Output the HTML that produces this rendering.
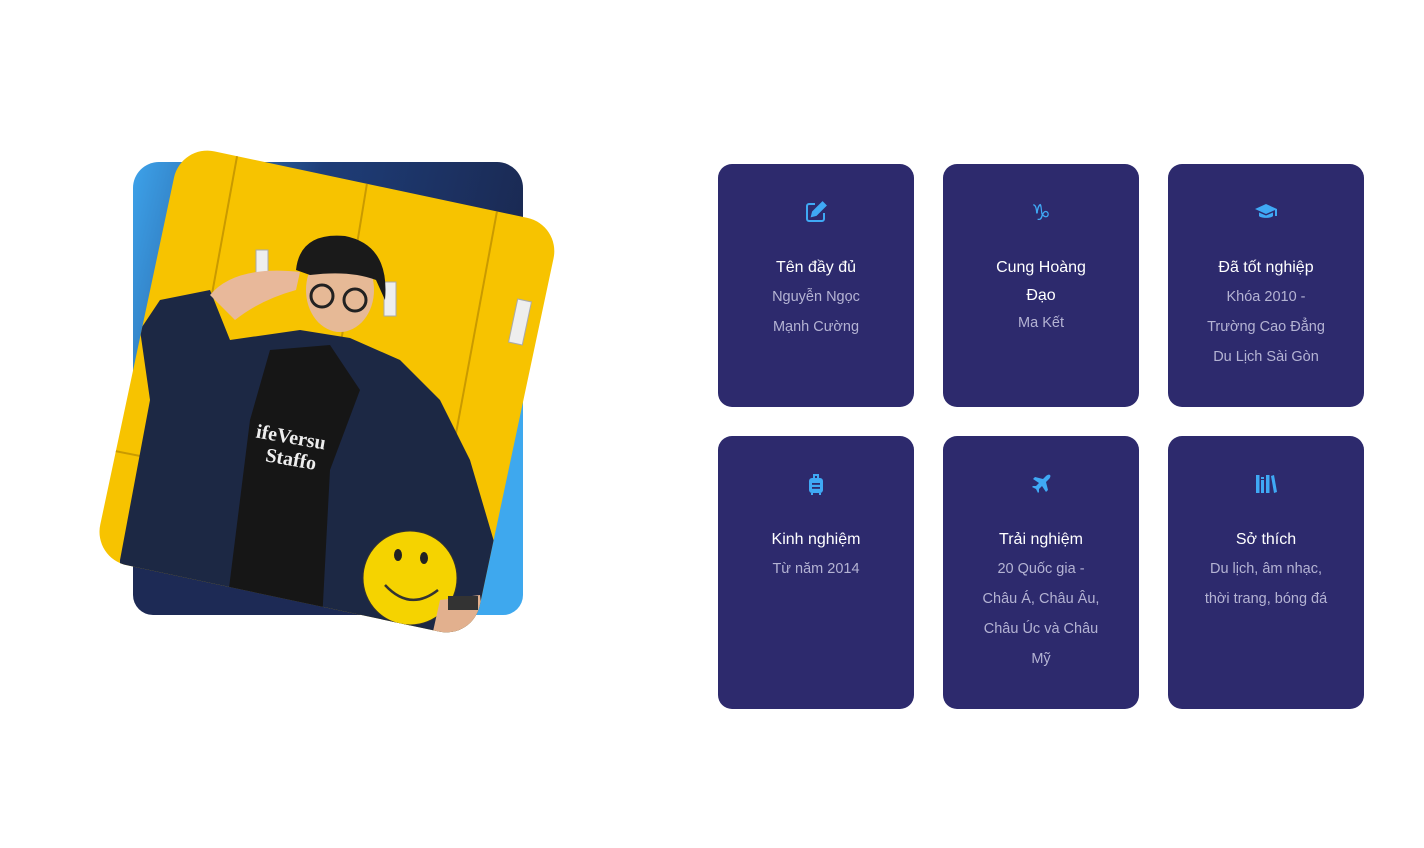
<!DOCTYPE html>
<html><head><meta charset="utf-8"><style>
body{margin:0;width:1424px;height:848px;background:#fff;position:relative;overflow:hidden;font-family:"Liberation Sans",sans-serif}
.card{position:absolute;width:196px;background:#2d2a6d;border-radius:14px;text-align:center;color:#fff}
.card svg{position:absolute;left:86px;top:36px}
.t{position:absolute;left:0;right:0;top:90px;font-size:16px;line-height:28px}
.d{color:#b4b3d3;font-size:14.5px;line-height:30px;padding:0 36px}
</style></head><body>
<svg width="560" height="560" style="position:absolute;left:80px;top:110px" viewBox="80 110 560 560">
<defs>
<linearGradient id="bg" x1="0" y1="0" x2="1" y2="0.3"><stop offset="0" stop-color="#3da2ea"/><stop offset="0.45" stop-color="#1e3d78"/><stop offset="1" stop-color="#1a2850"/></linearGradient>
<clipPath id="cp"><rect x="133" y="180" width="388" height="423" rx="34" transform="rotate(12 327 391)"/></clipPath>
</defs>
<rect x="133" y="162" width="390" height="453" rx="26" fill="url(#bg)"/>
<rect x="420" y="380" width="103" height="235" rx="20" fill="#3ea8ee"/>
<rect x="133" y="540" width="300" height="75" rx="20" fill="#1d2a55"/>
<rect x="133" y="180" width="388" height="423" rx="34" transform="rotate(12 327 391)" fill="#f7c300"/>
<g clip-path="url(#cp)">
<g stroke="#c99a00" stroke-width="2" fill="none">
<line x1="240" y1="140" x2="180" y2="470"/><line x1="370" y1="165" x2="320" y2="470"/><line x1="500" y1="195" x2="440" y2="520"/><line x1="110" y1="450" x2="170" y2="462"/>
</g>
<rect x="256" y="250" width="12" height="26" fill="#eee" stroke="#aaa"/><rect x="384" y="282" width="12" height="34" fill="#eee" stroke="#aaa"/><rect x="513" y="300" width="14" height="44" fill="#eee" stroke="#aaa" transform="rotate(12 520 322)"/>
<path d="M160 300 L210 290 L230 340 L300 330 L350 338 L400 360 L440 400 L470 460 L495 545 L490 660 L120 660 L120 560 L150 400 L140 330 Z" fill="#1c2844"/>
<path d="M270 350 L330 345 L360 390 L330 470 L320 660 L220 660 L250 420 Z" fill="#161616"/>
<text x="255" y="440" fill="#eee" font-family="Liberation Serif" font-size="20" font-weight="bold" transform="rotate(10 270 440)">ifeVersu</text>
<text x="265" y="462" fill="#eee" font-family="Liberation Serif" font-size="20" font-weight="bold" transform="rotate(10 270 460)">Staffo</text>
<path d="M210 295 Q235 265 300 272 L296 290 Q260 300 235 320 Z" fill="#e8b89a"/>
<ellipse cx="340" cy="290" rx="34" ry="42" fill="#e6b996"/>
<path d="M296 270 Q300 232 345 236 Q390 245 385 300 L376 280 Q350 270 310 275 Z" fill="#1a1a1a"/>
<circle cx="322" cy="296" r="11" fill="none" stroke="#222" stroke-width="3"/><circle cx="355" cy="300" r="11" fill="none" stroke="#222" stroke-width="3"/>
<circle cx="410" cy="578" r="47" fill="#f5d300" stroke="#333" stroke-width="1"/>
<path d="M385 585 Q410 612 438 590" stroke="#333" stroke-width="2.5" fill="none"/><ellipse cx="398" cy="555" rx="4" ry="6" fill="#222"/><ellipse cx="424" cy="558" rx="4" ry="6" fill="#222"/>
<path d="M440 600 L480 595 L485 640 L430 645 Z" fill="#e2b08e"/>
<rect x="448" y="596" width="30" height="14" fill="#333"/>
</g>
</svg>

<div class="card" style="left:718px;top:164px;height:243px">
<svg width="24" height="24" viewBox="0 0 24 24" fill="none" stroke="#3fa9f5" stroke-width="2"><path d="M11 4H5a2 2 0 0 0-2 2v13a2 2 0 0 0 2 2h13a2 2 0 0 0 2-2v-6"/><path d="M18.5 2.5l3 3L12 15l-4 1 1-4z" fill="#3fa9f5"/></svg>
<div class="t">Tên đầy đủ<div class="d">Nguyễn Ngọc Mạnh Cường</div></div></div>
<div class="card" style="left:943px;top:164px;height:243px">
<svg width="24" height="24" viewBox="0 0 24 24"><text x="12" y="20" text-anchor="middle" fill="#3fa9f5" font-size="22" font-family="DejaVu Sans">♑</text></svg>
<div class="t">Cung Hoàng<br>Đạo<div class="d" style="margin-top:-2px">Ma Kết</div></div></div>
<div class="card" style="left:1168px;top:164px;height:243px">
<svg width="24" height="24" viewBox="0 0 24 24" fill="#3fa9f5"><path d="M12 4L1 9l11 5 9-4v6h2V9z"/><path d="M5 12.5V16c2 2.5 12 2.5 14 0v-3.5l-7 3z"/></svg>
<div class="t">Đã tốt nghiệp<div class="d">Khóa 2010 - Trường Cao Đẳng Du Lịch Sài Gòn</div></div></div>

<div class="card" style="left:718px;top:436px;height:273px">
<svg width="24" height="24" viewBox="0 0 24 24" fill="#3fa9f5"><path d="M9 2h6v4h-2V4h-2v2H9z"/><rect x="5" y="6" width="14" height="15" rx="3"/><rect x="8" y="11" width="8" height="1.8" fill="#2d2a6d"/><rect x="8" y="15" width="8" height="1.8" fill="#2d2a6d"/><rect x="7" y="21" width="2" height="2"/><rect x="15" y="21" width="2" height="2"/></svg>
<div class="t">Kinh nghiệm<div class="d">Từ năm 2014</div></div></div>
<div class="card" style="left:943px;top:436px;height:273px">
<svg width="24" height="24" viewBox="0 0 24 24" fill="#3fa9f5"><path d="M21 3c-1-1-3 0-4 1l-3 3-8-2-2 2 6 4-3 3H4l-1 1 4 2 2 4 1-1v-3l3-3 4 6 2-2-2-8 3-3c1-1 2-3 1-4z"/></svg>
<div class="t">Trải nghiệm<div class="d">20 Quốc gia - Châu Á, Châu Âu, Châu Úc và Châu Mỹ</div></div></div>
<div class="card" style="left:1168px;top:436px;height:273px">
<svg width="24" height="24" viewBox="0 0 24 24" fill="#3fa9f5"><rect x="2" y="3" width="3.5" height="18"/><rect x="7" y="8" width="3" height="13"/><rect x="7" y="5" width="3" height="2"/><rect x="12" y="3" width="3.5" height="18"/><path d="M17 4l3-1 3 17-3 1z"/></svg>
<div class="t">Sở thích<div class="d">Du lịch, âm nhạc, thời trang, bóng đá</div></div></div>
</body></html>
